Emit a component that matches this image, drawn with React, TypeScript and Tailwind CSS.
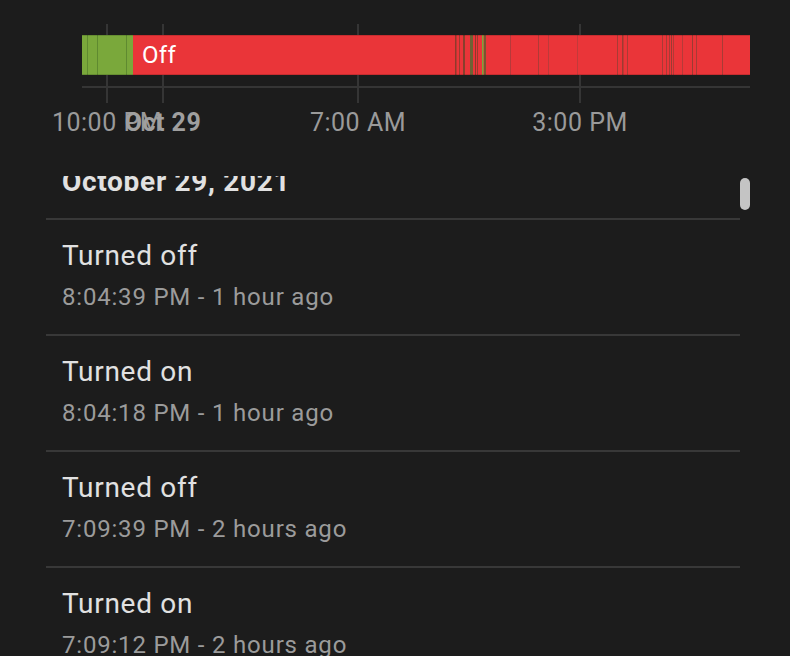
const greenLines = [87, 97, 126];

// thin state changes inside the long "off" stretch
const redLines: { x: number; w: number; c: string }[] = [
  { x: 455, w: 1.5, c: "#8e3a2c" },
  { x: 459, w: 1, c: "#9a3b2f" },
  { x: 463, w: 2, c: "#8a3f2c" },
  { x: 470, w: 3, c: "#6e6234" },
  { x: 475, w: 1, c: "#8e3a2c" },
  { x: 477, w: 1, c: "#9a3b2f" },
  { x: 482, w: 1.5, c: "#7aa83b" },
  { x: 484, w: 2, c: "#7a5531" },
  { x: 510, w: 1, c: "#b6393a" },
  { x: 538, w: 1, c: "#b03a36" },
  { x: 548, w: 1, c: "#bd3a3a" },
  { x: 577, w: 1, c: "#c23a3a" },
  { x: 617, w: 1, c: "#a83b35" },
  { x: 622, w: 1.5, c: "#9c3b31" },
  { x: 627, w: 1, c: "#a83b35" },
  { x: 662, w: 1, c: "#a83b35" },
  { x: 666, w: 1, c: "#a83b35" },
  { x: 669, w: 1, c: "#a83b35" },
  { x: 671, w: 1, c: "#9c3b31" },
  { x: 673, w: 1, c: "#b03a36" },
  { x: 682, w: 1, c: "#b63a38" },
  { x: 692, w: 1, c: "#9c3b31" },
  { x: 696, w: 1, c: "#a83b35" },
  { x: 722, w: 1, c: "#a83b35" },
];

const entries = [
  { title: "Turned off", time: "8:04:39 PM - 1 hour ago" },
  { title: "Turned on", time: "8:04:18 PM - 1 hour ago" },
  { title: "Turned off", time: "7:09:39 PM - 2 hours ago" },
  { title: "Turned on", time: "7:09:12 PM - 2 hours ago" },
];

function Timeline() {
  return (
    <svg width={790} height={140} className="block" style={{ fontFamily: "Roboto, sans-serif" }}>
      {[107, 163, 358, 580].map((x) => (
        <rect key={x} x={x - 1} y={24} width={2} height={79} fill="#353535" />
      ))}
      <rect x={82} y={86} width={668} height={2} fill="#353535" />

      <rect x={82} y={35} width={51} height={40} fill="#7aa83b" />
      {greenLines.map((x) => (
        <rect key={x} x={x} y={35} width={1} height={40} fill="#5f8a30" />
      ))}
      <rect x={133} y={35} width={617} height={40} fill="#ea3539" />
      {redLines.map((l) => (
        <rect key={l.x} x={l.x} y={35} width={l.w} height={40} fill={l.c} />
      ))}
      <rect x={82} y={35} width={668} height={1} fill="#000" opacity={0.15} />
      <rect x={82} y={74} width={668} height={1} fill="#000" opacity={0.15} />
      <text x={142} y={63} fontSize={24} fill="#ffffff" letterSpacing={0.3}>
        Off
      </text>

      <g fontSize={25} fill="#9a9a9a" textAnchor="middle" letterSpacing={0.5}>
        <text x={107} y={131}>10:00 PM</text>
        <text x={163} y={131} fontWeight={700} fill="#9f9f9f">
          Oct 29
        </text>
        <text x={358} y={131}>7:00 AM</text>
        <text x={580} y={131}>3:00 PM</text>
      </g>
    </svg>
  );
}

export default function App() {
  return (
    <div className="h-[656px] w-[790px] overflow-hidden bg-[#1c1c1c] font-['Roboto',sans-serif]">
      <Timeline />
      <div className="mt-[36px] ml-[46px] mr-[40px] flex h-[480px] overflow-hidden">
        <div className="flex-1 -mt-[8px]">
          <div className="border-b-2 border-[#383838] pb-[22px] pl-4 text-[28px] leading-[28px] font-bold tracking-[0.7px] text-[#e1e1e1]">
            October 29, 2021
          </div>
          {entries.map((e, i) => (
            <div key={i} className="border-b-2 border-[#383838] pt-4 pb-5 pl-4">
              <div className="text-[28px] leading-[40px] tracking-[0.7px] text-[#e1e1e1]">{e.title}</div>
              <div className="mt-1 text-[24px] leading-[34px] tracking-[0.8px] text-[#9b9b9b]">{e.time}</div>
            </div>
          ))}
        </div>
        <div className="w-[10px] pt-[2px]">
          <div className="h-[32px] rounded-full bg-[#c4c4c4]" />
        </div>
      </div>
    </div>
  );
}
